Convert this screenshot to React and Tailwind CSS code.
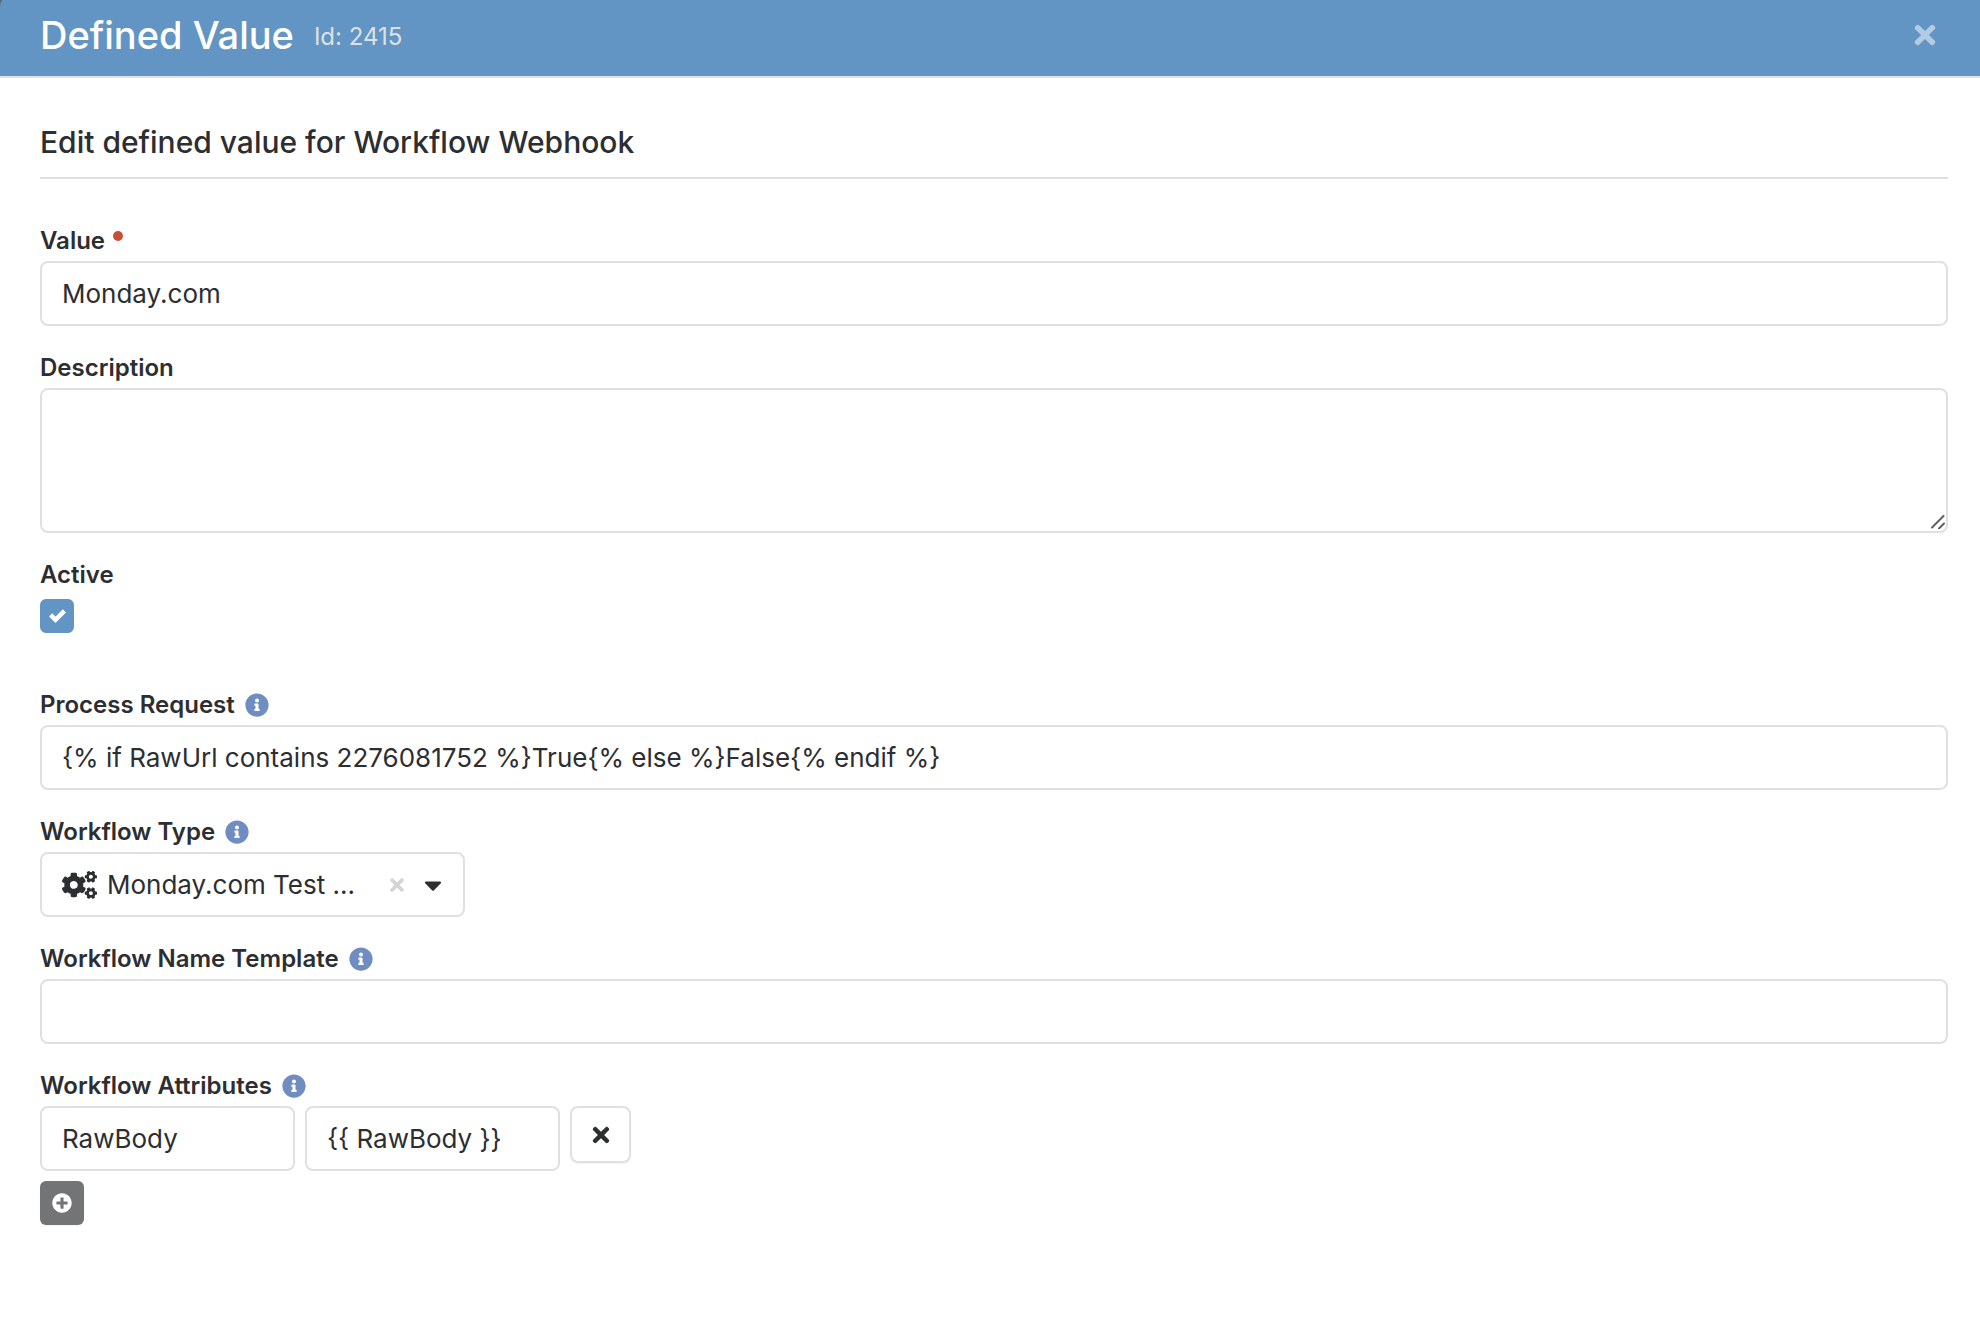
import { useState } from "react";
import {
  FaCaretDown,
  FaCogs,
  FaInfoCircle,
  FaPlusCircle,
  FaTimes,
} from "react-icons/fa";

const inputClass =
  "block h-[65px] border-2 border-[#dfe0e1] rounded-lg bg-white px-5 text-[26px] text-[#2c2e31] focus:outline-none focus:border-[#6295c3]";

function FieldLabel({ htmlFor, children, required, help }) {
  return (
    <div className="flex items-center mb-1 h-8">
      <label htmlFor={htmlFor} className="text-2xl leading-8 font-semibold">
        {children}
      </label>
      {required && (
        <span className="ml-2 mb-2.5 size-2.5 rounded-full bg-[#c84f36]" />
      )}
      {help && (
        <button type="button" aria-label="Help" className="ml-2.5">
          <FaInfoCircle className="size-6 text-[#6f8dc1]" />
        </button>
      )}
    </div>
  );
}

export default function App() {
  const [value, setValue] = useState("Monday.com");
  const [description, setDescription] = useState("");
  const [active, setActive] = useState(true);
  const [processRequest, setProcessRequest] = useState(
    "{% if RawUrl contains 2276081752 %}True{% else %}False{% endif %}"
  );
  const [nameTemplate, setNameTemplate] = useState("");
  const [attributes, setAttributes] = useState([
    { key: "RawBody", value: "{{ RawBody }}" },
  ]);

  const updateAttribute = (index, field, text) => {
    setAttributes(
      attributes.map((a, i) => (i === index ? { ...a, [field]: text } : a))
    );
  };

  return (
    <div className="min-h-screen bg-white text-[#2c2e31] font-['Inter',sans-serif]">
      {/* Header */}
      <div className="bg-[#59656f]">
        <header className="flex items-center justify-between h-[78px] px-10 pb-1.5 bg-[#6295c3] border-b-2 border-[#dfe0e1] rounded-tl-[3px_8px]">
          <div className="flex items-end gap-5">
            <h1 className="text-[38px] leading-12 font-medium text-white">
              Defined Value
            </h1>
            <small className="text-2xl leading-11 text-[#dfe0e1]">
              Id: 2415
            </small>
          </div>
          <button type="button" aria-label="Close">
            <FaTimes className="size-[30px] text-[#b3cbe2]" />
          </button>
        </header>
      </div>

      {/* Content */}
      <form className="pl-10 pr-8 pt-11">
        <h2 className="pb-[15px] border-b-2 border-[#dfe0e1] text-[30px] leading-10 font-medium">
          Edit defined value for Workflow Webhook
        </h2>

        <div className="flex flex-col gap-[26px] pt-[46px]">
          {/* Value */}
          <div>
            <FieldLabel htmlFor="value" required>
              Value
            </FieldLabel>
            <input
              id="value"
              type="text"
              value={value}
              onChange={(e) => setValue(e.target.value)}
              className={`${inputClass} w-full`}
            />
          </div>

          {/* Description */}
          <div>
            <FieldLabel htmlFor="description">Description</FieldLabel>
            <div className="relative">
              <textarea
                id="description"
                value={description}
                onChange={(e) => setDescription(e.target.value)}
                className="block w-full h-[145px] resize-none border-2 border-[#dfe0e1] rounded-lg bg-white px-5 py-3 text-[26px] focus:outline-none focus:border-[#6295c3]"
              />
              <svg
                viewBox="0 0 14 14"
                className="absolute right-[3px] bottom-1 size-3.5"
                stroke="#5f6062"
                strokeWidth="2"
                strokeLinecap="round"
              >
                <path d="M1 12.5L12.5 1M8 13.5L13 8.5" />
              </svg>
            </div>
          </div>

          {/* Active */}
          <div className="pb-[30px]">
            <FieldLabel htmlFor="active">Active</FieldLabel>
            <div className="relative size-[34px] mt-2">
              <input
                id="active"
                type="checkbox"
                checked={active}
                onChange={(e) => setActive(e.target.checked)}
                className="block appearance-none size-[34px] border-2 border-[#dfe0e1] rounded-md checked:border-[#6295c3] checked:bg-[#6295c3]"
              />
              {active && (
                <svg
                  viewBox="0 0 17 14"
                  className="absolute inset-0 m-auto w-[17px] h-3.5 pointer-events-none"
                  fill="none"
                  stroke="#fff"
                  strokeWidth="4.5"
                >
                  <path d="M1.6 5.9L6.5 10.8L15.4 1.9" />
                </svg>
              )}
            </div>
          </div>

          {/* Process Request */}
          <div>
            <FieldLabel htmlFor="process-request" help>
              Process Request
            </FieldLabel>
            <input
              id="process-request"
              type="text"
              value={processRequest}
              onChange={(e) => setProcessRequest(e.target.value)}
              className={`${inputClass} w-full`}
            />
          </div>

          {/* Workflow Type */}
          <div>
            <FieldLabel htmlFor="workflow-type" help>
              Workflow Type
            </FieldLabel>
            <div className="flex items-center w-[425px] h-[65px] border-2 border-[#dfe0e1] rounded-lg pl-5 pr-4">
              <FaCogs className="w-[35px] h-7 shrink-0" />
              <select
                id="workflow-type"
                className="flex-1 min-w-0 ml-2.5 appearance-none bg-transparent text-[26px] focus:outline-none"
              >
                <option>Monday.com Test ...</option>
              </select>
              <button type="button" aria-label="Clear" className="mr-3">
                <FaTimes className="size-5 text-[#d3d4d5]" />
              </button>
              <FaCaretDown className="size-7" />
            </div>
          </div>

          {/* Workflow Name Template */}
          <div>
            <FieldLabel htmlFor="name-template" help>
              Workflow Name Template
            </FieldLabel>
            <input
              id="name-template"
              type="text"
              value={nameTemplate}
              onChange={(e) => setNameTemplate(e.target.value)}
              className={`${inputClass} w-full`}
            />
          </div>

          {/* Workflow Attributes */}
          <div>
            <FieldLabel htmlFor="attribute-key-0" help>
              Workflow Attributes
            </FieldLabel>
            {attributes.map((attribute, i) => (
              <div key={i} className="flex items-start gap-2.5 mb-2.5">
                <input
                  id={`attribute-key-${i}`}
                  type="text"
                  value={attribute.key}
                  onChange={(e) => updateAttribute(i, "key", e.target.value)}
                  className={`${inputClass} w-[255px]`}
                />
                <input
                  type="text"
                  aria-label="Attribute value"
                  value={attribute.value}
                  onChange={(e) => updateAttribute(i, "value", e.target.value)}
                  className={`${inputClass} w-[255px]`}
                />
                <button
                  type="button"
                  aria-label="Remove"
                  onClick={() =>
                    setAttributes(attributes.filter((_, n) => n !== i))
                  }
                  className="flex items-center justify-center w-[61px] h-[57px] border-2 border-[#dfe0e1] rounded-lg shadow-xs"
                >
                  <FaTimes className="size-6" />
                </button>
              </div>
            ))}
            <button
              type="button"
              aria-label="Add"
              onClick={() =>
                setAttributes([...attributes, { key: "", value: "" }])
              }
              className="flex items-center justify-center size-11 rounded-md bg-[#737475] text-white shadow-xs"
            >
              <FaPlusCircle className="size-5" />
            </button>
          </div>
        </div>
      </form>
    </div>
  );
}
